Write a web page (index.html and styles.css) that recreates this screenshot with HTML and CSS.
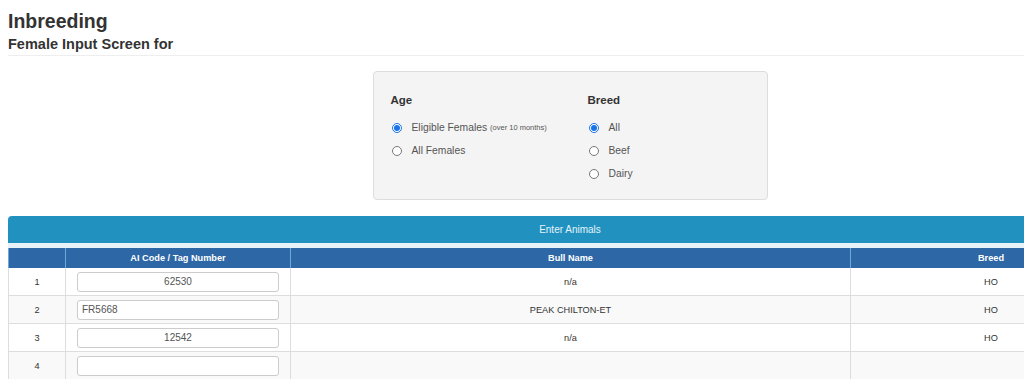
FILE: index.html
```html
<!DOCTYPE html>
<html lang="en">
<head>
  <meta charset="UTF-8" />
  <title>Inbreeding</title>
  <link rel="stylesheet" href="styles.css">
</head>
<body>
  <div class="page">
    <h1>Inbreeding</h1>
    <h2 class="subtitle">Female Input Screen for</h2>

    <div class="filter-panel">
      <div class="filter-group">
        <h3>Age</h3>
        <label class="radio-row"><input type="radio" name="age" checked> Eligible Females <small>(over 10 months)</small></label>
        <label class="radio-row"><input type="radio" name="age"> All Females</label>
      </div>
      <div class="filter-group">
        <h3>Breed</h3>
        <label class="radio-row"><input type="radio" name="breed" checked> All</label>
        <label class="radio-row"><input type="radio" name="breed"> Beef</label>
        <label class="radio-row"><input type="radio" name="breed"> Dairy</label>
      </div>
    </div>

    <div class="animals-banner">Enter Animals</div>

    <table class="animals-table">
      <thead>
        <tr>
          <th class="col-num"></th>
          <th class="col-code">AI Code / Tag Number</th>
          <th class="col-bull">Bull Name</th>
          <th class="col-breed">Breed</th>
        </tr>
      </thead>
      <tbody>
        <tr>
          <td>1</td>
          <td><input type="text" class="code-input centered" value="62530"></td>
          <td>n/a</td>
          <td>HO</td>
        </tr>
        <tr>
          <td>2</td>
          <td><input type="text" class="code-input" value="FR5668"></td>
          <td>PEAK CHILTON-ET</td>
          <td>HO</td>
        </tr>
        <tr>
          <td>3</td>
          <td><input type="text" class="code-input centered" value="12542"></td>
          <td>n/a</td>
          <td>HO</td>
        </tr>
        <tr>
          <td>4</td>
          <td><input type="text" class="code-input" value=""></td>
          <td></td>
          <td></td>
        </tr>
      </tbody>
    </table>
  </div>
</body>
</html>
```

FILE: styles.css
```css
html, body {
  height: 100%;
}
body {
  box-sizing: border-box;
  margin: 0;
  padding: 8px 0 0 8px;
  overflow: hidden;
  font-family: "Liberation Sans", Arial, sans-serif;
  color: #333;
  background-color: #fff;
}
.page {
  width: 1124px;
}
h1 {
  margin: 2px 0 0;
  font-size: 19.5px;
  line-height: 22px;
  font-weight: bold;
}
.subtitle {
  margin: 4px 0 0;
  padding-bottom: 2px;
  font-size: 14.5px;
  line-height: 17px;
  font-weight: bold;
  border-bottom: 1px solid #eee;
}
.filter-panel {
  width: 359px;
  margin: 15px auto 16px;
  padding: 21px 17px 14px;
  display: flex;
  background-color: #f4f4f4;
  border: 1px solid #ddd;
  border-radius: 4px;
}
.filter-group {
  display: flex;
  flex-direction: column;
}
.filter-group:first-child {
  width: 197px;
}
.filter-group h3 {
  margin: 0 0 8px;
  font-size: 11.5px;
  line-height: 15px;
  font-weight: bold;
}
.radio-row {
  display: flex;
  align-items: center;
  gap: 10px;
  height: 23px;
  line-height: 23px;
  font-size: 10.3px;
  color: #555;
}
.radio-row input {
  flex: none;
  width: 10px;
  height: 10px;
  margin: 0 0 0 1px;
  accent-color: #1a73e8;
}
.radio-row small {
  font-size: 7.5px;
  margin-left: -7px;
}
.animals-banner {
  height: 27px;
  line-height: 27px;
  text-align: center;
  font-size: 10px;
  color: #e4f2f9;
  background-color: #2192c0;
  border-radius: 4px 4px 0 0;
  border-bottom: 5px solid #e8f3f9;
}
.animals-table {
  width: 100%;
  border-collapse: collapse;
  font-size: 9.2px;
}
.animals-table th {
  height: 20px;
  padding: 0;
  background-color: #2d67a6;
  color: #fff;
  font-weight: bold;
  border-left: 1px solid #6aaad8;
  border-right: 1px solid #6aaad8;
  text-align: center;
}
.animals-table td {
  height: 27px;
  padding: 0 11px;
  text-align: center;
  border-bottom: 1px solid #ddd;
  border-left: 1px solid #ddd;
  border-right: 1px solid #ddd;
  color: #333;
}
.animals-table tbody tr:nth-child(even) td {
  background-color: #f9f9f9;
}
.col-num { width: 56px; }
.col-code { width: 224px; }
.col-bull { width: 559px; }
.code-input {
  box-sizing: border-box;
  width: 202px;
  height: 20px;
  padding: 0 4px;
  display: block;
  font-family: "Liberation Sans", Arial, sans-serif;
  font-size: 10px;
  color: #555;
  background-color: #fff;
  border: 1px solid #ccc;
  border-radius: 3px;
}
.code-input.centered {
  text-align: center;
}
```
